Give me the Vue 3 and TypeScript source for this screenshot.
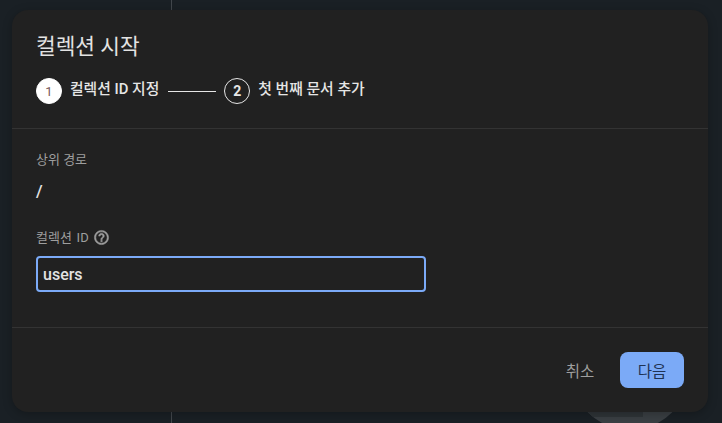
<script setup lang="ts">
import { ref } from 'vue'

const collectionId = ref('users')
</script>

<template>
  <div class="page">
    <div class="rule"></div>
    <div class="fab"><div class="fab-chip"></div></div>

    <div class="dialog">
      <header class="head">
        <h1 class="title">컬렉션 시작</h1>
        <div class="stepper">
          <div class="step">
            <span class="dot active">1</span>
            <span class="step-label">컬렉션 ID 지정</span>
          </div>
          <div class="step-line"></div>
          <div class="step">
            <span class="dot">2</span>
            <span class="step-label">첫 번째 문서 추가</span>
          </div>
        </div>
      </header>

      <section class="body">
        <div class="field-label">상위 경로</div>
        <div class="path">/</div>
        <div class="field-label id-label">
          컬렉션 ID
          <svg class="help" viewBox="0 0 24 24" width="17" height="17">
            <path
              fill="currentColor"
              stroke="currentColor"
              stroke-width="0.7"
              d="M11 18h2v-2h-2v2zm1-16C6.48 2 2 6.48 2 12s4.48 10 10 10 10-4.48 10-10S17.52 2 12 2zm0 18c-4.41 0-8-3.59-8-8s3.59-8 8-8 8 3.59 8 8-3.59 8-8 8zm0-14c-2.21 0-4 1.79-4 4h2c0-1.1.9-2 2-2s2 .9 2 2c0 2-3 1.75-3 5h2c0-2.25 3-2.5 3-5 0-2.21-1.79-4-4-4z"
            />
          </svg>
        </div>
        <input v-model="collectionId" class="id-input" type="text" />
      </section>

      <footer class="foot">
        <button class="btn cancel">취소</button>
        <button class="btn next">다음</button>
      </footer>
    </div>
  </div>
</template>

<style>
html,
body {
  margin: 0;
  background: #1a2025;
}
</style>

<style scoped>
.page {
  position: relative;
  width: 722px;
  height: 423px;
  overflow: hidden;
  background: #1a2025;
  box-sizing: border-box;
  padding: 10px 14px 11px 12px;
  font-family: Roboto, "Noto Sans CJK KR", sans-serif;
}

/* things behind the dialog */
.rule {
  position: absolute;
  left: 171px;
  top: 0;
  bottom: 0;
  width: 1px;
  background: #42474c;
}

.fab {
  position: absolute;
  left: 571px;
  top: 312px;
  width: 118px;
  height: 118px;
  overflow: hidden;
  border-radius: 50%;
  background: #3a3f43;
}

.fab-chip {
  position: absolute;
  left: 0;
  top: 85px;
  width: 72px;
  height: 20px;
  background: #2f3438;
}

.dialog {
  position: relative;
  height: 402px;
  display: flex;
  flex-direction: column;
  background: #212121;
  border-radius: 16px;
  box-shadow: 0 2px 10px rgba(0, 0, 0, 0.25);
}

.head {
  height: 119px;
  box-sizing: border-box;
  padding: 25px 24px 0;
  border-bottom: 1px solid #333;
}

.title {
  margin: 0;
  font-size: 21.4px;
  line-height: 24px;
  font-weight: 400;
  color: #e3e3e3;
}

.stepper {
  display: flex;
  align-items: center;
  margin-top: 19px;
}

.step {
  display: flex;
  align-items: center;
  gap: 8px;
}

.dot {
  display: flex;
  align-items: center;
  justify-content: center;
  width: 26px;
  height: 26px;
  box-sizing: border-box;
  border: 1.5px solid #e6e6e6;
  border-radius: 50%;
  font-size: 14px;
  font-weight: 700;
  color: #e6e6e6;
}

.dot.active {
  background: #fff;
  border-color: #fff;
  font-size: 13px;
  font-weight: 400;
  color: #7a5a5a;
}

.step-label {
  position: relative;
  top: -4px;
  font-size: 14.8px;
  font-weight: 500;
  color: #e6e6e6;
}

.step-line {
  width: 48px;
  height: 1px;
  margin: 0 8px 0 9px;
  background: #e6e6e6;
}

.body {
  flex: 1;
  padding: 23px 24px 0;
}

.field-label {
  font-size: 13px;
  line-height: 16px;
  color: #9e9e9e;
}

.path {
  margin-top: 12px;
  font-size: 17px;
  line-height: 22px;
  font-weight: 500;
  color: #e3e3e3;
}

.id-label {
  display: flex;
  align-items: center;
  gap: 4px;
  margin-top: 27px;
  word-spacing: 1.5px;
}

.help {
  color: #9e9e9e;
}

.id-input {
  display: block;
  width: 390px;
  height: 36px;
  margin-top: 10px;
  padding: 0 5px;
  box-sizing: border-box;
  background: transparent;
  border: 2px solid #7baaf7;
  border-radius: 4px;
  outline: none;
  font-family: inherit;
  font-size: 16px;
  font-weight: 500;
  color: #e3e3e3;
}

.foot {
  height: 85px;
  box-sizing: border-box;
  display: flex;
  justify-content: flex-end;
  align-items: flex-start;
  gap: 8px;
  padding: 24px 24px 0;
  border-top: 1px solid #333;
}

.btn {
  height: 36px;
  padding: 0;
  border: 0;
  border-radius: 8px;
  background: transparent;
  font-family: inherit;
  font-size: 15.5px;
}

.cancel {
  width: 64px;
  color: #9e9e9e;
}

.next {
  width: 64px;
  background: #7baaf7;
  color: #1f3354;
}
</style>
